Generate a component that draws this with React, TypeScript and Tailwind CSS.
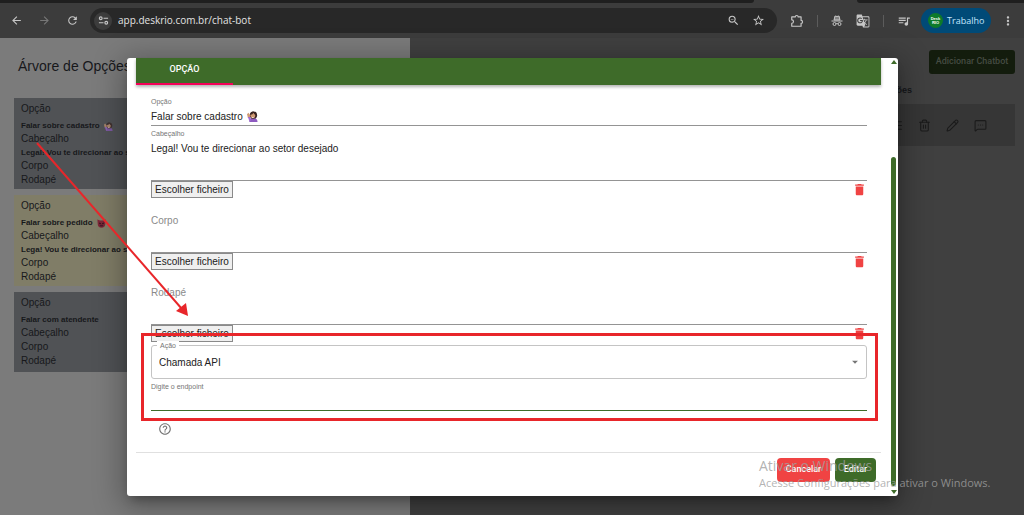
import type { ReactNode } from 'react';
import { MessageSquareMore, Pencil, TextAlignJustify, Trash2 } from 'lucide-react';
import {
  MdArrowBack,
  MdArrowDropDown,
  MdArrowForward,
  MdDelete,
  MdGTranslate,
  MdHelpOutline,
  MdMoreVert,
  MdOutlineZoomOut,
  MdQueueMusic,
  MdRefresh,
  MdStarBorder,
} from 'react-icons/md';

interface TreeOption {
  title: string;
  header?: string;
  color: string;
  emoji?: ReactNode;
}

function RaisedHandEmoji({ className = '' }: { className?: string }) {
  return (
    <svg viewBox="0 0 24 24" className={className} aria-hidden="true">
      <path d="M5 24c0-7 3-9 9-9s9 3 9 9z" fill="#8e5bc0" />
      <circle cx="14" cy="9" r="8" fill="#3a2522" />
      <ellipse cx="13" cy="10" rx="5" ry="6" fill="#d09a74" />
      <path d="M8 8c3 0 5-1 6-4 1 3 3 4 5 5l-1-6-5-2-4 2z" fill="#3a2522" />
      <path d="M10 13h5l-2 2z" fill="#fff" />
      <path d="M0 7l3-3 4 5v6H2z" fill="#d09a74" />
      <path d="M2 13h6v9H5z" fill="#a06bd1" />
    </svg>
  );
}

function RedFaceEmoji({ className = '' }: { className?: string }) {
  return (
    <svg viewBox="0 0 24 24" className={className} aria-hidden="true">
      <path d="M1 1l7 3h8l7-3-1 13c0 6-4 9-10 9S2 20 2 14z" fill="#7d2738" />
      <path d="M6 9l5 2-2 3-3-1zM18 9l-5 2 2 3 3-1z" fill="#33151c" />
      <path d="M7 17c3-2 7-2 10 0l-2 3H9z" fill="#4a1a2c" />
    </svg>
  );
}

function ExtensionIcon({ className = '' }: { className?: string }) {
  return (
    <svg viewBox="0 0 24 24" className={className} fill="none" stroke="currentColor" strokeWidth="2" strokeLinejoin="round" aria-hidden="true">
      <path d="M3 5h6a2.500 2.500 0 0 1 5 0h5v6a2.500 2.500 0 0 1 0 5v5H3v-5a3 3 0 0 0 0-6z" />
    </svg>
  );
}

function IncognitoIcon({ className = '' }: { className?: string }) {
  return (
    <svg viewBox="0 0 24 24" className={className} fill="none" stroke="currentColor" strokeWidth="2" aria-hidden="true">
      <path d="M6 10l2-8 4 1 4-1 2 8z" fill="currentColor" fillOpacity="0.5" />
      <path d="M1 12h22" />
      <circle cx="7" cy="18" r="3" />
      <circle cx="17" cy="18" r="3" />
      <path d="M10 17.500c1-1 3-1 4 0" />
    </svg>
  );
}

function SiteSettingsIcon({ className = '' }: { className?: string }) {
  return (
    <svg viewBox="0 0 24 24" className={className} fill="none" stroke="currentColor" strokeWidth="2.500" aria-hidden="true">
      <circle cx="6" cy="7" r="3" />
      <path d="M12 7h10M2 17h10" />
      <circle cx="18" cy="17" r="3" />
    </svg>
  );
}

const options: TreeOption[] = [
  {
    title: 'Falar sobre cadastro',
    header: 'Legal! Vou te direcionar ao setor desejado',
    color: 'bg-[#505255]',
    emoji: <RaisedHandEmoji className="size-[9px] opacity-70" />,
  },
  {
    title: 'Falar sobre pedido',
    header: 'Lega! Vou te direcionar ao setor desejado',
    color: 'bg-[#807d67]',
    emoji: <RedFaceEmoji className="size-[9px]" />,
  },
  { title: 'Falar com atendente', color: 'bg-[#505255]' },
];

function BrowserBar() {
  return (
    <header className="bg-[#3c3c3c] text-[#c7c7c7]">
      <div className="flex h-[3px]">
        <div className="w-[754px] rounded-br bg-[#1f1f1f]"></div>
        <div className="w-[103px]"></div>
        <div className="flex-1 rounded-bl bg-[#1f1f1f]"></div>
      </div>
      <div className="flex h-[35px] items-center pr-[9px] pl-[10px]">
        <nav className="flex items-center gap-[15px]">
          <button aria-label="Voltar"><MdArrowBack className="size-[13px]" /></button>
          <button aria-label="Avançar" className="text-[#777777]"><MdArrowForward className="size-[13px]" /></button>
          <button aria-label="Atualizar"><MdRefresh className="size-[13px]" /></button>
        </nav>
        <div className="ml-[11px] flex h-[25px] flex-1 items-center rounded-full bg-[#282828] pr-3 pl-1">
          <button aria-label="Informações do site" className="flex size-[18px] items-center justify-center rounded-full bg-[#3c3c3c]">
            <SiteSettingsIcon className="size-[11px]" />
          </button>
          <input
            aria-label="Endereço"
            defaultValue="app.deskrio.com.br/chat-bot"
            className="ml-[6px] min-w-0 flex-1 bg-transparent font-['Open_Sans',sans-serif] text-[10px] text-[#e3e3e3] outline-none"
          />
          <button aria-label="Zoom"><MdOutlineZoomOut className="size-[13px]" /></button>
          <button aria-label="Favoritar" className="ml-3"><MdStarBorder className="size-[13px]" /></button>
        </div>
        <div className="ml-[13px] flex items-center gap-[13px]">
          <button aria-label="Extensões"><ExtensionIcon className="size-[14px]" /></button>
          <span className="h-3 w-px bg-[#5c5c5c]"></span>
          <button aria-label="Anônimo"><IncognitoIcon className="size-3" /></button>
          <button aria-label="Traduzir"><MdGTranslate className="size-[14px]" /></button>
          <span className="h-3 w-px bg-[#5c5c5c]"></span>
          <button aria-label="Mídia"><MdQueueMusic className="size-[14px]" /></button>
        </div>
        <button className="ml-[10px] flex h-[25px] w-[70px] items-center gap-1 rounded-full bg-[#004a77] pl-[7px] text-[#c2e7ff]">
          <span className="flex size-[15px] flex-col items-center justify-center rounded-full bg-[#0d7a2b] text-[4px] leading-[4px] font-bold text-white">
            <span>Desk</span>
            <span>RIO</span>
          </span>
          <span className="font-['Open_Sans',sans-serif] text-[9px]">Trabalho</span>
        </button>
        <button aria-label="Menu" className="ml-[10px]"><MdMoreVert className="size-[14px]" /></button>
      </div>
    </header>
  );
}

function OptionCard({ option }: { option: TreeOption }) {
  return (
    <article className={`min-h-[80px] px-[7px] pt-1 pb-[2px] text-[10px] leading-[14px] ${option.color}`}>
      <h2>Opção</h2>
      <p className="mt-1 flex h-3 items-center gap-1 text-[8px] font-bold">
        {option.title}
        {option.emoji}
      </p>
      <h3>Cabeçalho</h3>
      {option.header && <p className="text-[8px] leading-[13px] font-bold">{option.header}</p>}
      <h3>Corpo</h3>
      <h3>Rodapé</h3>
    </article>
  );
}

function MessageField({ id, label, value }: { id: string; label: string; value?: string }) {
  return (
    <div className="pt-[3px]">
      <label htmlFor={id} className="block h-[9px] text-[7px] leading-[9px] text-[#757575]">
        {value ? label : ''}
      </label>
      <textarea
        id={id}
        aria-label={label}
        defaultValue={value}
        placeholder={label}
        className="block h-[43px] w-full resize-none border-b border-[#949494] pt-[5px] leading-3 outline-none placeholder:text-[#8a8a8a]"
      />
      <div className="flex h-[17px] items-center justify-between">
        <button className="h-[17px] border border-[#8a8a8a] bg-[#efefef] px-[3px] leading-[15px]">Escolher ficheiro</button>
        <button aria-label={`Remover ficheiro de ${label}`} className="text-[#f04343]">
          <MdDelete className="size-[15px]" />
        </button>
      </div>
    </div>
  );
}

function OptionDialog() {
  return (
    <div
      role="dialog"
      aria-label="Opção"
      className="flex h-full rounded-[3px] bg-white pl-[9px] text-[10px] text-[#212121] shadow-[0_7px_10px_-4px_rgba(0,0,0,0.3),0_6px_30px_5px_rgba(0,0,0,0.3)]"
    >
      <div className="flex min-w-0 flex-1 flex-col">
        <div role="tablist" className="flex h-[27px] bg-[#3e6b29] shadow-[0_2px_3px_rgba(0,0,0,0.3)]">
          <button role="tab" aria-selected="true" className="w-[97px] border-b-2 border-[#f50057] pb-[2px] font-[Roboto,sans-serif] text-[9px] font-medium text-white">
            OPÇÃO
          </button>
        </div>

        <form className="flex-1 pt-3 pr-[14px] pl-[15px]" onSubmit={(e) => e.preventDefault()}>
          <label htmlFor="option" className="block h-[9px] text-[7px] leading-[9px] text-[#757575]">Opção</label>
          <div className="flex h-5 items-center gap-1 border-b border-[#949494] pt-[2px]">
            <input id="option" defaultValue="Falar sobre cadastro" className="field-sizing-content outline-none" />
            <RaisedHandEmoji className="size-[11px]" />
          </div>

          <MessageField id="header" label="Cabeçalho" value="Legal! Vou te direcionar ao setor desejado" />
          <MessageField id="body" label="Corpo" />
          <MessageField id="footer" label="Rodapé" />

          <div className="relative pt-[3px]">
            <div className="relative">
              <label htmlFor="action" className="absolute -top-1 left-[6px] bg-white px-[3px] text-[7px] leading-[9px] text-[#757575]">
                Ação
              </label>
              <select id="action" className="block h-[34px] w-full appearance-none rounded-[3px] border border-[#c4c4c4] bg-white pl-[7px] outline-none">
                <option>Chamada API</option>
              </select>
              <MdArrowDropDown className="pointer-events-none absolute top-[10px] right-[5px] size-[14px] text-[#757575]" />
            </div>
            <label htmlFor="endpoint" className="mt-[3px] block h-[9px] text-[7px] leading-[9px] text-[#757575]">
              Digite o endpoint
            </label>
            <input id="endpoint" className="block h-5 w-full border-b border-[#3e6b29] outline-none" />
            {/* Red highlight around the API call fields */}
            <div className="pointer-events-none absolute -top-[9px] -right-[11px] -bottom-[10px] -left-[10px] border-[3px] border-[#e8262a]"></div>
          </div>

          <button aria-label="Ajuda" className="mt-[11px] ml-[7px] block text-[#757575]">
            <MdHelpOutline className="size-[14px]" />
          </button>
        </form>

        <footer className="flex justify-end gap-[5px] border-t border-[#e0e0e0] pt-[5px] pr-[5px] pb-[14px] font-[Roboto,sans-serif] text-[9px] font-medium text-white">
          <button className="h-6 w-[53px] rounded bg-[#f04343]">Cancelar</button>
          <button className="h-6 w-[41px] rounded bg-[#3e6b29]">Editar</button>
        </footer>
      </div>

      {/* Scrollbar */}
      <div className="mr-px ml-[9px] flex w-[7px] flex-col items-center pt-[2px] pb-[2px]">
        <span className="border-x-[3px] border-b-[4px] border-x-transparent border-b-[#3e6b29]"></span>
        <span className="mt-[93px] w-[5px] flex-1 rounded-full bg-[#3e6b29]"></span>
        <span className="mt-1 border-x-[3px] border-t-[4px] border-x-transparent border-t-[#3e6b29]"></span>
      </div>
    </div>
  );
}

export default function App() {
  return (
    <div className="flex min-h-screen flex-col bg-[#404040] font-['Liberation_Sans',Arial,sans-serif] text-[#17181b]">
      <BrowserBar />
      <main className="relative flex flex-1">
        <aside className="w-2/5 bg-[#7b7b7b] px-[14px]">
          <h1 className="px-1 pt-[18px] text-[14px] leading-5">Árvore de Opções</h1>
          <div className="mt-[22px] flex flex-col gap-[6px]">
            {options.map((option) => (
              <OptionCard key={option.title} option={option} />
            ))}
          </div>
        </aside>

        <section className="flex flex-1 flex-col items-end pt-3 pr-[9px]">
          <button className="h-6 w-[86px] rounded-[3px] bg-[#131c0d] font-[Roboto,sans-serif] text-[9px] font-medium text-[#454b42]">
            Adicionar Chatbot
          </button>
          <h2 className="mt-[9px] pr-[103px] text-[9px] leading-[14px] font-bold text-[#15171a]">Ações</h2>
          <div className="mt-[7px] flex h-[42px] w-full items-center justify-end gap-[15px] bg-[#363636] pr-7 text-[#1b1b1b]">
            <button aria-label="Listar"><TextAlignJustify className="size-[13px]" /></button>
            <button aria-label="Excluir"><Trash2 className="size-[13px]" /></button>
            <button aria-label="Editar"><Pencil className="size-[13px]" /></button>
            <button aria-label="Mensagens"><MessageSquareMore className="size-[13px]" /></button>
          </div>
        </section>

        <div className="absolute inset-0 pt-5 pr-[126px] pb-[19px] pl-[127px]">
          <OptionDialog />
        </div>

        {/* Arrow pointing at the API call fields */}
        <svg className="pointer-events-none absolute top-[104px] left-9 h-[176px] w-[154px]" viewBox="36 142 154 176" aria-hidden="true">
          <path d="M37 143L182 309" stroke="#e8262a" strokeWidth="2" />
          <path d="M188 316l-12-5 10-8z" fill="#e8262a" />
        </svg>

        {/* Windows activation watermark */}
        <div className="pointer-events-none absolute right-[38px] bottom-[25px] w-[227px] font-['Open_Sans',sans-serif] whitespace-nowrap text-[#a0a0a0]/80">
          <p className="text-[14px] leading-5">Ativar o Windows</p>
          <p className="text-[11px] leading-[14px]">Acesse Configurações para ativar o Windows.</p>
        </div>
      </main>
    </div>
  );
}
